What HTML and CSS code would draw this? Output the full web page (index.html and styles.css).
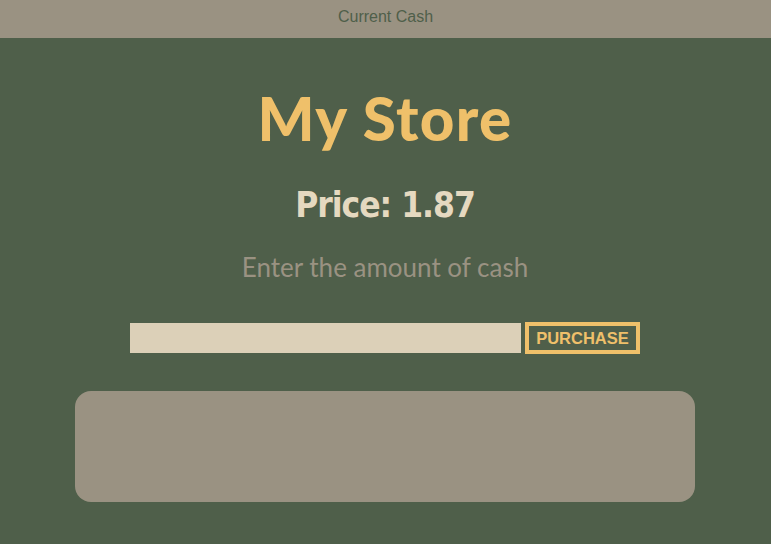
FILE: index.html
```html
<!DOCTYPE html>
<html>
<head>
<meta charset="utf-8">
<link rel="stylesheet" href="styles.css">
</head>
<body>
<header class="topbar">Current Cash</header>
<main class="store">
  <h1 class="title">My Store</h1>
  <h2 class="price">Price: 1.87</h2>
  <p class="hint">Enter the amount of cash</p>
  <div class="form">
    <input class="cash" type="text">
    <button class="buy">PURCHASE</button>
  </div>
  <div class="result"></div>
</main>
</body>
</html>
```

FILE: styles.css
```css
html, body {
  margin: 0;
  padding: 0;
  background: #4f5f4a;
  height: 100%;
}
.topbar {
  height: 38px;
  background: #9a9282;
  color: #4f5f4a;
  font-family: "Liberation Sans", Arial, sans-serif;
  font-size: 16px;
  line-height: 33px;
  text-align: center;
}
.store {
  display: flex;
  flex-direction: column;
  align-items: center;
  padding-right: 1px;
}
.title {
  margin: 47px 0 0;
  font-family: "Comic Sans MS", "Lato", sans-serif;
  font-weight: 900;
  font-size: 60px;
  line-height: 66px;
  letter-spacing: 1.4px;
  color: #efc06a;
}
.price {
  margin: 34px 0 0;
  font-family: "DejaVu Sans Condensed", "DejaVu Sans", sans-serif;
  font-weight: bold;
  font-size: 35px;
  line-height: 40px;
  letter-spacing: -1px;
  color: #e5d9c0;
}
.hint {
  margin: 25px 0 0;
  font-family: "Lato", "Open Sans", sans-serif;
  font-size: 26px;
  line-height: 34px;
  color: #9a9282;
}
.form {
  margin-top: 38px;
  display: flex;
  align-items: center;
  gap: 4px;
}
.cash {
  width: 391px;
  height: 30px;
  box-sizing: border-box;
  border: none;
  padding: 0;
  background: #dcd0b8;
}
.buy {
  width: 115px;
  height: 32px;
  box-sizing: border-box;
  border: 4px solid #efc06a;
  background: #4f5f4a;
  color: #efc06a;
  font-family: "Liberation Sans", Arial, sans-serif;
  font-weight: bold;
  font-size: 16.5px;
  padding: 0;
}
.result {
  margin-top: 37px;
  width: 620px;
  height: 111px;
  border-radius: 16px;
  background: #9a9282;
}
```
